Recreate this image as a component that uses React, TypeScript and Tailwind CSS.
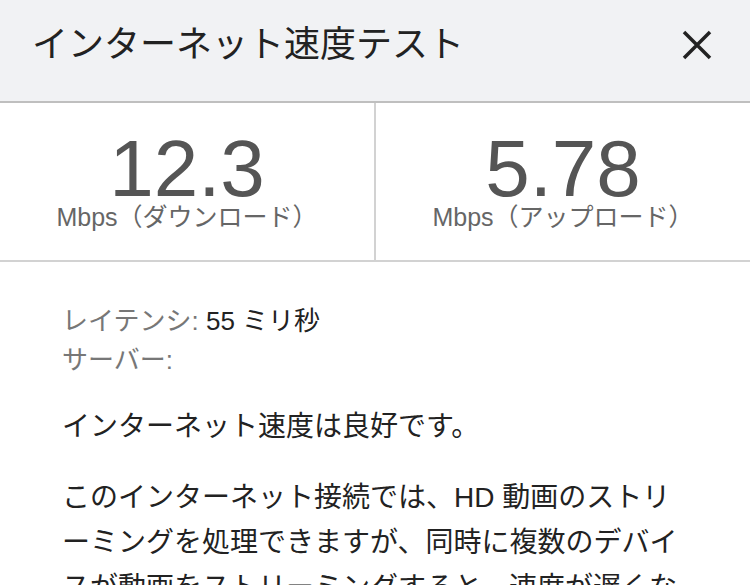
import React from "react"

const font = "font-['Liberation_Sans','Noto_Sans_CJK_JP',sans-serif]"

function Stat({ value, label, border }: { value: string; label: string; border?: boolean }) {
  return (
    <div className={`flex-1 flex flex-col items-center pt-[34px] ${border ? "border-r-2 border-[#d2d2d2]" : ""}`}>
      <div className="text-[80px] leading-[64px] text-[#555555]">{value}</div>
      <div className="mt-[1px] text-[25px] leading-[30px] text-[#666666]">{label}</div>
    </div>
  )
}

export default function App() {
  return (
    <div className={`w-[750px] h-[585px] overflow-hidden bg-white ${font}`}>
      {/* HEADER */}
      <div className="h-[103px] bg-[#f1f2f4] border-b-2 border-[#bfbfbf] flex items-center justify-between pl-[32px] pr-[38px] pb-[12px]">
        <h1 className="text-[36px] leading-[44px] text-[#222222] font-normal">インターネット速度テスト</h1>
        <svg width="30" height="30" viewBox="0 0 30 30" className="text-[#222222]">
          <path d="M2 2 L28 28 M28 2 L2 28" stroke="currentColor" strokeWidth="3.5" strokeLinecap="butt" fill="none" />
        </svg>
      </div>

      {/* STATS */}
      <div className="flex h-[159px] border-b-2 border-[#d2d2d2]">
        <Stat value="12.3" label="Mbps（ダウンロード）" border />
        <Stat value="5.78" label="Mbps（アップロード）" />
      </div>

      {/* DETAILS */}
      <div className="px-[62px] pt-[40px]">
        <div className="text-[26px] leading-[39px]">
          <p>
            <span className="text-[#777777]">レイテンシ: </span>
            <span className="text-[#222222]">55 ミリ秒</span>
          </p>
          <p className="text-[#777777]">サーバー:</p>
        </div>

        <p className="mt-[27px] text-[28px] leading-[40px] text-[#222222]">インターネット速度は良好です。</p>

        <p className="mt-[28px] text-[28px] leading-[45px] text-[#222222]">
          このインターネット接続では、HD 動画のストリーミングを処理できますが、同時に複数のデバイスが動画をストリーミングすると、速度が遅くなる場合があります。
        </p>
      </div>
    </div>
  )
}
